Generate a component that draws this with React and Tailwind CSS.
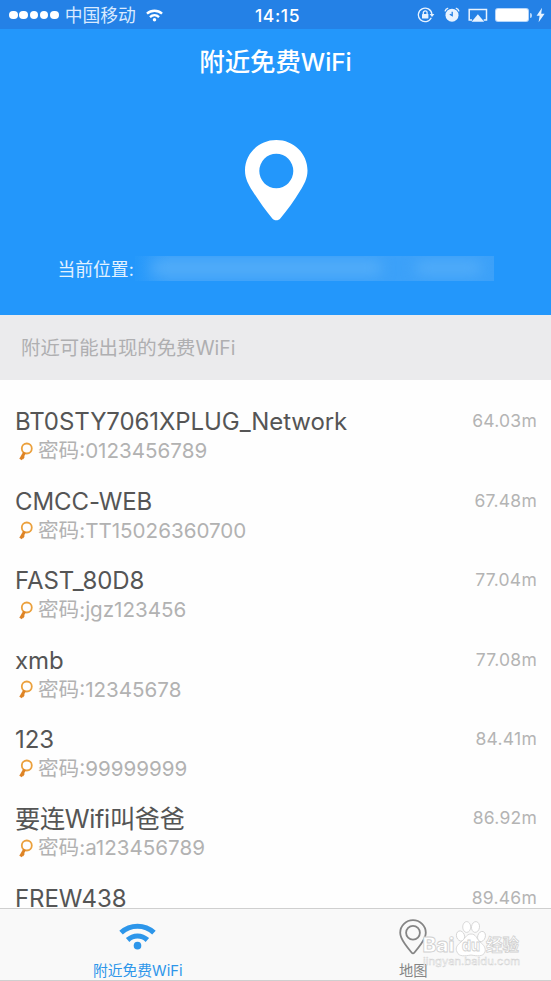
const networks = [
  { name: 'BT0STY7061XPLUG_Network', password: '0123456789', distance: '64.03m' },
  { name: 'CMCC-WEB', password: 'TT15026360700', distance: '67.48m' },
  { name: 'FAST_80D8', password: 'jgz123456', distance: '77.04m' },
  { name: 'xmb', password: '12345678', distance: '77.08m' },
  { name: '123', password: '99999999', distance: '84.41m' },
  { name: '要连Wifi叫爸爸', password: 'a123456789', distance: '86.92m', wide: true },
  { name: 'FREW438', distance: '89.46m' },
];

function WifiIcon({ className }) {
  return (
    <svg viewBox="0 0 36 26" className={className} fill="none" stroke="currentColor">
      <path d="M2 9.200C11 .9 25 .9 34 9.200" strokeWidth="5" />
      <path d="M8.400 16.400C14 11.200 22 11.200 27.600 16.400" strokeWidth="5" />
      <circle cx="18" cy="21.900" r="3.700" fill="currentColor" stroke="none" />
    </svg>
  );
}

function StatusBar() {
  return (
    <div className="flex h-[29px] items-center bg-[#2481e6] pl-[9px] pr-[6px] text-white">
      <div className="flex w-[240px] items-center">
        <div className="mt-px flex gap-[1.7px]">
          {[0, 1, 2, 3, 4].map((i) => (
            <span key={i} className="h-[8.6px] w-[8.6px] rounded-full bg-white" />
          ))}
        </div>
        <span className="ml-[6px] mt-px text-[17.8px] leading-[29px] text-[#d9eaff]">中国移动</span>
        <WifiIcon className="ml-[10px] mt-[2px] h-[13px] w-[17px]" />
      </div>
      <span className="ml-[6px] mt-px w-[60px] whitespace-nowrap text-[17.5px] font-medium leading-[31px] tracking-[0.6px]">14:15</span>
      <div className="ml-auto mt-px flex items-center text-[#e8f3ff]">
        <svg viewBox="0 0 18 16" className="h-4 w-[18px]" fill="none" stroke="currentColor" strokeWidth="1.3">
          <path d="M14.3 10.8A6.8 6.8 0 1 1 14.9 7" />
          <path d="M12.6 7h4.8L15 10Z" fill="currentColor" stroke="none" />
          <path d="M6.3 7.4V5.8a1.900 1.900 0 0 1 3.800 0v1.600" />
          <rect x="5" y="7" width="6.4" height="4.6" rx=".6" fill="currentColor" stroke="none" />
        </svg>
        <svg viewBox="0 0 16 16" className="ml-[9px] h-4 w-4" fill="none" stroke="currentColor">
          <circle cx="8" cy="8.2" r="6.5" fill="currentColor" stroke="none" />
          <path d="M1 4.400C1.400 2.800 2.600 1.500 4.200 1.100M15 4.400C14.600 2.800 13.400 1.500 11.800 1.100" strokeWidth="1.400" />
          <path d="M8.200 4.800v3.800L5.800 7.300" stroke="#2481e6" strokeWidth="1.300" />
        </svg>
        <svg viewBox="0 0 20 15" className="ml-[8px] h-[15px] w-5" fill="none" stroke="currentColor" strokeWidth="1.500">
          <path d="M4 11.900H1.200V1.500h17.300v10.400h-2.800" />
          <path d="M9.900 6.200 16.200 13.800H3.600Z" fill="currentColor" stroke="none" />
        </svg>
        <div className="ml-[7px] h-[14px] w-[34px] rounded-[3px] bg-[#b5d5fa] p-px">
          <div className="h-full rounded-[2px] bg-white" />
        </div>
        <span className="ml-px h-[5px] w-[2px] rounded-r bg-[#b5d5fa]" />
        <svg viewBox="0 0 9 16" className="ml-[4px] h-4 w-[9px]" fill="currentColor">
          <path d="M6 .8.6 8.800h3L2.600 15.200 8.600 6.800H5.200Z" />
        </svg>
      </div>
    </div>
  );
}

function KeyIcon() {
  return (
    <svg viewBox="0 0 15 19" className="h-[19px] w-[15px]" fill="none">
      <circle cx="8.8" cy="6.500" r="5" stroke="#eba03c" strokeWidth="1.800" />
      <path d="M6.600 10.400 2.600 17.600" stroke="#de8426" strokeWidth="3" />
      <path d="m4.400 13.500 2.400 1.200-1.500 2.500-2.300-1.100Z" fill="#de8426" />
    </svg>
  );
}

function NetworkRow({ name, password, distance, wide }) {
  return (
    <li className="flex h-[79.4px] shrink-0 items-start justify-between pl-[15px] pr-[14px]">
      <div>
        <div
          className={`h-[30px] whitespace-nowrap leading-[30px] text-[#555555] ${
            wide ? 'text-[25.2px] tracking-[-0.3px]' : 'text-[24px] tracking-[-0.08px]'
          }`}
        >
          {name}
        </div>
        {password && (
          <div className="flex h-[28px] items-center pl-[3px] text-[20.6px] text-[#b2b2b2]">
            <KeyIcon />
            <span className="ml-[5px] whitespace-nowrap leading-[28px]">密码:{password}</span>
          </div>
        )}
      </div>
      <span className="text-[17.5px] leading-[28px] tracking-[0.25px] text-[#b4b4b4]">{distance}</span>
    </li>
  );
}

function Watermark() {
  return (
    <svg viewBox="0 0 104 50" className="absolute left-[419px] top-[10px] h-[50px] w-[104px]" fill="#ffffff" stroke="#d0d0d0" strokeWidth=".8">
      <text x="3.500" y="32.500" fontSize="20" fontWeight="800" textLength="32" lengthAdjust="spacingAndGlyphs">Bai</text>
      <ellipse cx="41.500" cy="17" rx="4" ry="5.200" transform="rotate(-18 41.500 17)" />
      <ellipse cx="47.700" cy="8" rx="4" ry="5.400" />
      <ellipse cx="56.500" cy="8" rx="4" ry="5.400" transform="rotate(8 56.500 8)" />
      <ellipse cx="62.500" cy="17.500" rx="3.800" ry="5.200" transform="rotate(18 62.500 17.500)" />
      <path d="M52 15c-5 0-6 5-10 8-4 3-6 6-4 10 2 5 8 4 14 3 6 1 12 2 14-3 1-4-1-7-5-10-4-4-4-8-9-8Z" />
      <text x="43" y="32" fontSize="15" fontWeight="800" textLength="18" lengthAdjust="spacingAndGlyphs">du</text>
      <text x="67" y="32" fontSize="17" fontWeight="700" textLength="33" lengthAdjust="spacingAndGlyphs">经验</text>
      <text x="4" y="45.500" fontSize="10" strokeWidth=".4" textLength="97" lengthAdjust="spacingAndGlyphs">jingyan.baidu.com</text>
    </svg>
  );
}

export default function App() {
  return (
    <div className="flex h-[981px] w-[551px] flex-col overflow-hidden bg-[#fefefe] font-[Inter,'Noto_Sans_CJK_SC',sans-serif]">
      <StatusBar />
      <header className="flex h-[286px] shrink-0 flex-col items-center bg-[#2397fb] text-white">
        <h1 className="mt-[17px] h-8 text-[25.4px] font-medium leading-8">
          附近免费<span className="text-[24.3px]">WiFi</span>
        </h1>
        <svg viewBox="0 0 64 82" className="mt-[61px] h-[82px] w-16 shrink-0" fill="white">
          <path fillRule="evenodd" d="M32.3 1C14.8 1 1 14.6 1 31.5c0 8 3.5 14.2 7.5 20.5 6.300 10 12.600 18.800 19.600 27.200 2.200 2.700 6.200 2.700 8.400 0C43.500 70.800 50 62 56 52c4-6.300 7.500-12.500 7.500-20.500C63.500 14.600 49.800 1 32.300 1Zm0 13.700a17 17.300 0 1 1 0 34.600 17 17.300 0 0 1 0-34.600Z" />
        </svg>
        <div className="mt-[33px] flex h-[28px] w-[436px] items-center">
          <span className="mt-[3px] w-[77px] shrink-0 whitespace-nowrap text-[17.8px] leading-[28px] text-[#e3f2ff]">当前位置:</span>
          <div className="flex h-[25px] flex-1 items-center overflow-hidden bg-linear-to-r from-[#2599fb] from-0% via-[#3ca1f9] via-10% to-[#3ca1f9] pl-4 pr-3">
            <div className="h-3 w-[70%] rounded-full bg-[#58b0f9] blur-[7px]" />
            <div className="ml-auto h-3 w-[20%] rounded-full bg-[#55aef9] blur-[7px]" />
          </div>
        </div>
      </header>
      <div className="h-[65px] shrink-0 bg-[#ebebed] pl-[21px] text-[19.4px] leading-[66px] text-[#afafb1]">附近可能出现的免费WiFi</div>
      <ul className="flex min-h-0 flex-1 flex-col overflow-hidden pt-[27.4px]">
        {networks.map((n) => (
          <NetworkRow key={n.name} {...n} />
        ))}
      </ul>
      <nav className="relative flex h-[73px] shrink-0 border-y border-[#cfcfcf] bg-[#f9f9f9]">
        <div className="flex w-1/2 flex-col items-center text-[#2d96ea]">
          <WifiIcon className="mt-[14px] h-[27px] w-[37px] shrink-0" />
          <span className="mt-[12px] text-[14.8px] leading-[18px]">附近免费WiFi</span>
        </div>
        <div className="flex w-1/2 flex-col items-center text-[#858585]">
          <svg viewBox="0 0 28 36" className="mt-[10px] h-9 w-7 shrink-0" fill="none" stroke="currentColor" strokeWidth="1.800">
            <path d="M14 1.200C7 1.200 1.200 6.800 1.200 13.700c0 4.300 2 7.300 4.600 11 2.400 3.500 4.800 6.400 7 9.100.6.800 1.800.8 2.400 0 2.200-2.700 4.600-5.600 7-9.100 2.600-3.700 4.600-6.700 4.600-11C26.800 6.800 21 1.200 14 1.200Z" />
            <circle cx="14" cy="13.700" r="6.900" />
          </svg>
          <span className="mt-[7px] text-[14.300px] leading-[18px]">地图</span>
        </div>
        <Watermark />
      </nav>
    </div>
  );
}
